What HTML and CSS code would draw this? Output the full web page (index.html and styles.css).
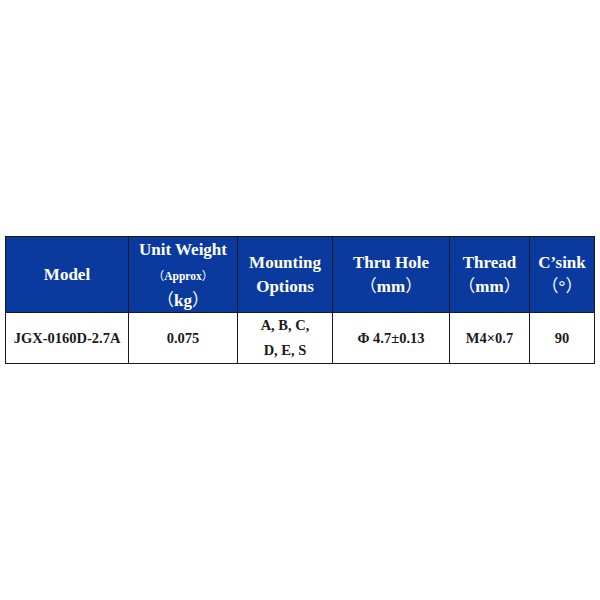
FILE: index.html
```html
<!DOCTYPE html>
<html>
<head>
<meta charset="utf-8">
<link rel="stylesheet" href="styles.css">
</head>
<body>
<table class="spec">
  <colgroup>
    <col class="c1"><col class="c2"><col class="c3"><col class="c4"><col class="c5"><col class="c6">
  </colgroup>
  <thead>
    <tr>
      <th>Model</th>
      <th><div class="l1">Unit Weight</div><div class="small"><span class="p">（</span>Approx<span class="p">）</span></div><div class="l3"><span class="p">（</span>kg<span class="p">）</span></div></th>
      <th><div class="two">Mounting</div><div class="two">Options</div></th>
      <th><div class="two">Thru Hole</div><div class="two"><span class="p">（</span>mm<span class="p">）</span></div></th>
      <th><div class="two">Thread</div><div class="two"><span class="p">（</span>mm<span class="p">）</span></div></th>
      <th><div class="two">C’sink</div><div class="two"><span class="p">（</span>°<span class="p">）</span></div></th>
    </tr>
  </thead>
  <tbody>
    <tr>
      <td>JGX-0160D-2.7A</td>
      <td>0.075</td>
      <td><div class="bl">A, B, C,</div><div class="bl">D, E, S</div></td>
      <td>Φ 4.7±0.13</td>
      <td>M4×0.7</td>
      <td>90</td>
    </tr>
  </tbody>
</table>
</body>
</html>
```

FILE: styles.css
```css
html, body {
  margin: 0;
  padding: 0;
  background: #ffffff;
}
body {
  font-family: "Liberation Serif", "Noto Sans CJK SC", serif;
  font-weight: bold;
}
.spec {
  border-collapse: collapse;
  table-layout: fixed;
  width: 589px;
  margin: 236px 0 0 5px;
}
.c1 { width: 123px; }
.c2 { width: 109px; }
.c3 { width: 95px; }
.c4 { width: 117px; }
.c5 { width: 80px; }
.c6 { width: 65px; }
.spec th, .spec td {
  border: 1px solid #1a1a1a;
  text-align: center;
  vertical-align: middle;
  padding: 0;
}
.spec th {
  background: #0b3a9e;
  color: #ffffff;
  height: 75px;
  font-size: 17px;
  line-height: 22px;
}
.spec td {
  height: 49px;
  font-size: 14.5px;
  color: #1a1a1a;
}
.p {
  font-family: "Noto Sans CJK SC", sans-serif;
  font-weight: normal;
  line-height: 0;
}
.small {
  font-size: 11.5px;
  line-height: 28px;
}
.l1 { line-height: 24px; }
.l3 { line-height: 22px; }
.two { line-height: 24px; }
.bl { line-height: 25px; }
```
